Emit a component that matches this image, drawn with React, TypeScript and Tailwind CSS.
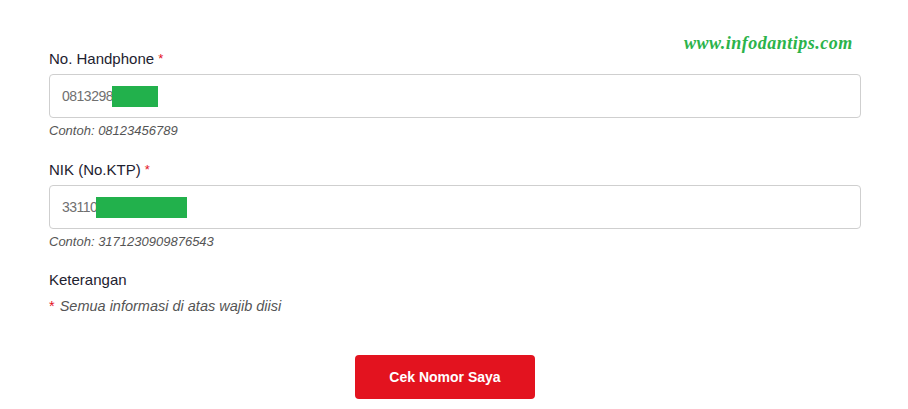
const GREEN = "bg-[#22b14c]";

const Field = ({
  label,
  value,
  maskWidth,
  hint,
}: {
  label: string;
  value: string;
  maskWidth: string;
  hint: string;
}) => (
  <div className="flex flex-col">
    <label className="text-[15px] leading-5 font-medium text-[#1e2230]">
      {label} <span className="text-[#e3131f] text-[13px] align-top">*</span>
    </label>
    <div className="mt-[5px] h-11 border border-[#cfcfcf] rounded-[4px] flex items-center pl-[12px] text-[14px] tracking-[-0.5px] text-[#707070]">
      <span>{value}</span>
      <span className={`${GREEN} ${maskWidth} h-[21px] -ml-[1px]`}></span>
    </div>
    <p className="mt-1 text-[13px] leading-[18px] italic text-[#555]">{hint}</p>
  </div>
);

export default function App() {
  return (
    <div
      className="relative w-[908px] h-[409px] bg-white overflow-hidden"
      style={{ fontFamily: '"Liberation Sans", Arial, sans-serif' }}
    >
      <div
        className="absolute left-[684px] top-[30px] text-[18px] font-bold italic text-[#2bb34a] tracking-[0.5px]"
        style={{ fontFamily: '"Liberation Serif", "DejaVu Serif", serif' }}
      >
        www.infodantips.com
      </div>

      <div className="ml-[49px] w-[812px] pt-[49px] flex flex-col">
        <Field label="No. Handphone" value="0813298" maskWidth="w-[46px]" hint="Contoh: 08123456789" />
        <div className="mt-5">
          <Field label="NIK (No.KTP)" value="33110" maskWidth="w-[91px]" hint="Contoh: 3171230909876543" />
        </div>

        <p className="mt-[19px] text-[15px] leading-5 font-medium text-[#1e2230]">Keterangan</p>
        <p className="mt-[6px] text-[14.5px] leading-5 text-[#555]">
          <span className="text-[#e3131f] mr-[5px]">*</span>
          <span className="italic">Semua informasi di atas wajib diisi</span>
        </p>

        <div className="mt-[39px]">
          <button className="ml-[306px] w-[180px] h-11 rounded-[4px] bg-[#e3131f] text-white text-[14px] font-bold">
            Cek Nomor Saya
          </button>
        </div>
      </div>
    </div>
  );
}
